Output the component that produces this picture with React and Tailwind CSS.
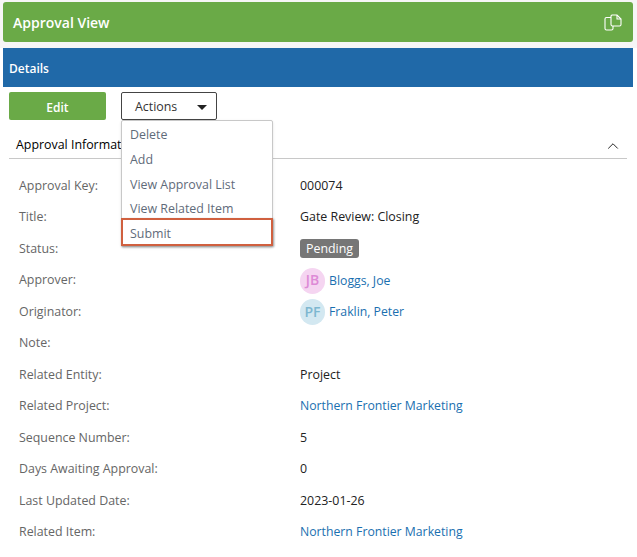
import { ChevronUp } from "lucide-react";

const font = { fontFamily: '"Open Sans", sans-serif' };

const linkCls = "text-[12.25px] text-[#1a6fb0]";

function Avatar({ initials, bg, color, name }) {
  return (
    <div className="flex items-center gap-[4px]">
      <span className={`flex h-[26px] w-[25px] items-center justify-center rounded-full pb-[2px] text-[14px] font-semibold ${bg} ${color}`}>
        {initials}
      </span>
      <span className={linkCls}>{name}</span>
    </div>
  );
}

const rows = [
  ["Approval Key:", "000074"],
  ["Title:", "Gate Review: Closing"],
  ["Status:", <span className="inline-block rounded-[3px] bg-[#767676] px-[6px] leading-[19px] text-white">Pending</span>],
  ["Approver:", <Avatar initials="JB" bg="bg-[#f5d5f1]" color="text-[#dd8ad6]" name="Bloggs, Joe" />],
  ["Originator:", <Avatar initials="PF" bg="bg-[#d3e8f1]" color="text-[#7db7d0]" name="Fraklin, Peter" />],
  ["Note:", ""],
  ["Related Entity:", "Project"],
  ["Related Project:", <span className={linkCls}>Northern Frontier Marketing</span>],
  ["Sequence Number:", "5"],
  ["Days Awaiting Approval:", "0"],
  ["Last Updated Date:", "2023-01-26"],
  ["Related Item:", <span className={linkCls}>Northern Frontier Marketing</span>],
];

export default function App() {
  return (
    <div className="h-[557px] w-[637px] overflow-hidden bg-white text-[12.4px]" style={font}>
      {/* top bar area */}
      <div className="bg-[#f6f6f6] pl-[3px] pr-[4px] pt-[2px] pb-[6px]">
        <div className="flex h-[40px] items-center justify-between rounded-[3px] bg-[#6aaa47] pl-[10px] pr-[11px]">
          <span className="text-[14px] font-semibold text-white">Approval View</span>
          <svg width="18" height="17" viewBox="0 0 18 17" fill="none" stroke="white" strokeWidth="1.1">
            <path d="M7 3.500H2.500a1.500 1.500 0 0 0-1.500 1.500v9.500A1.500 1.500 0 0 0 2.500 16h5A1.500 1.500 0 0 0 9 14.500V12" />
            <path d="M7 2a1.500 1.500 0 0 1 1.500-1H13l4 4v5.500a1.500 1.500 0 0 1-1.500 1.500h-7A1.500 1.500 0 0 1 7 10.500z" />
            <path d="M13 1v4h4" />
          </svg>
        </div>
      </div>

      <div className="ml-[3px] mr-[4px]">
        <div className="flex h-[39px] items-center bg-[#2069a8] pl-[6px] pt-[2px] text-[12px] font-semibold text-white">
          Details
        </div>

        <div className="relative">
          {/* buttons */}
          <div className="flex gap-[15px] pl-[6px] pt-[5px]">
            <button className="h-[28px] w-[97px] rounded-[2px] bg-[#6aaa47] pt-[3px] text-[12px] font-semibold text-white">
              Edit
            </button>
            <button className="flex h-[28px] w-[96px] items-center justify-between rounded-[2px] border border-[#444] bg-white pl-[13px] pr-[9px] pt-[3px] text-[#333]">
              Actions
              <span className="h-0 w-0 border-x-[5px] border-t-[5px] border-x-transparent border-t-[#222]" />
            </button>
          </div>

          {/* dropdown */}
          <div className="absolute left-[118px] top-[33px] z-10 w-[152px] rounded-[2px] border border-[#c8c8c8] bg-white pt-[1px] text-[#5f6b7a] shadow-sm">
            <div className="h-[25px] pl-[8px] leading-[25px]">Delete</div>
            <div className="h-[25px] pl-[8px] leading-[25px]">Add</div>
            <div className="h-[25px] pl-[8px] leading-[25px]">View Approval List</div>
            <div className="h-[21px] pl-[8px] leading-[23px]">View Related Item</div>
            <div className="-mx-px h-[28px] border-2 border-[#d0603f] pl-[7px] leading-[27px] shadow-[1px_1px_2px_#999]">Submit</div>
          </div>

          {/* section header */}
          <div className="mx-[6px] mt-[12px] flex h-[27px] items-center justify-between border-b border-[#c8c8c8] pl-[7px] pr-[5px] pt-[1px] text-[12.4px] text-black">
            <span>Approval Information</span>
            <ChevronUp size={18} strokeWidth={1.3} className="text-[#222]" />
          </div>

          {/* fields */}
          <div className="pt-[11.500px]">
            {rows.map(([label, value]) => (
              <div key={label} className="flex h-[31.500px] items-center pl-[16px]">
                <span className="w-[281px] text-[#666]">{label}</span>
                <span className="text-[#222]">{value}</span>
              </div>
            ))}
          </div>
        </div>
      </div>
    </div>
  );
}
